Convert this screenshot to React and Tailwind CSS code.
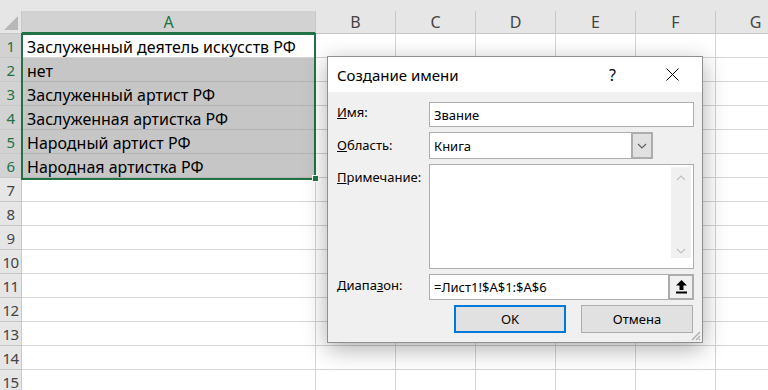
import React from "react";

const cells = [
  "Заслуженный деятель искусств РФ",
  "нет",
  "Заслуженный артист РФ",
  "Заслуженная артистка РФ",
  "Народный артист РФ",
  "Народная артистка РФ",
];

const otherCols = ["B", "C", "D", "E", "F", "G"];
const rows = Array.from({ length: 15 }, (_, i) => i + 1);

const Chevron = ({ up, color = "#606060", className = "" }) => (
  <svg width="10" height="6" viewBox="0 0 10 6" className={className}>
    <polyline
      points={up ? "1,5 5,1 9,5" : "1,1 5,5 9,1"}
      fill="none"
      stroke={color}
      strokeWidth="1.2"
    />
  </svg>
);

const Dialog = () => (
  <div className="absolute left-[327px] top-[56px] w-[376px] h-[287px] border border-[#8f8f8f] bg-[#f0f0f0] shadow-[0_6px_22px_rgba(0,0,0,0.32)] flex flex-col text-[13px] text-black font-['Noto_Sans','Liberation_Sans',sans-serif]">
    {/* Title bar */}
    <div className="h-[35px] bg-white flex items-center pl-[9px] shrink-0">
      <span className="text-[15px] leading-[20px]">Создание имени</span>
      <span className="ml-auto text-[16px] leading-[20px] mr-[50px]">?</span>
      <svg width="13" height="13" viewBox="0 0 13 13" className="mr-[23px]">
        <path d="M0.5 0.5 L12.5 12.5 M12.5 0.5 L0.5 12.5" stroke="#000" strokeWidth="1" />
      </svg>
    </div>

    {/* Body */}
    <div className="flex-1 flex flex-col pt-[10px] pl-[9px] pr-[8px] gap-[5px]">
      <div className="flex items-start">
        <div className="w-[92px] pt-[1px] leading-[18px]">
          <u>И</u>мя:
        </div>
        <div className="w-[265px] h-[25px] border border-[#adadad] bg-white flex items-center pl-[4px] leading-[18px]">
          Звание
        </div>
      </div>

      <div className="flex items-start">
        <div className="w-[92px] pt-[4px] leading-[18px]">
          <u>О</u>бласть:
        </div>
        <div className="w-[224px] h-[27px] border border-[#adadad] bg-white flex">
          <div className="flex-1 flex items-center pl-[4px] leading-[18px]">Книга</div>
          <div className="w-[22px] -my-[1px] -mr-[1px] border-2 border-[#adadad] bg-[#e1e1e1] flex items-center justify-center">
            <Chevron />
          </div>
        </div>
      </div>

      <div className="flex items-start">
        <div className="w-[92px] pt-[4px] leading-[18px]">
          <u>П</u>римечание:
        </div>
        <div className="w-[265px] h-[105px] border border-[#adadad] bg-white flex justify-end pt-[2px] pb-[10px] pr-[2px]">
          <div className="w-[20px] bg-[#f0f0f0] flex flex-col items-center justify-between pt-[8px] pb-[4px]">
            <Chevron up color="#c2c2c2" />
            <Chevron color="#c2c2c2" />
          </div>
        </div>
      </div>

      <div className="flex items-start">
        <div className="w-[92px] pt-[2px] leading-[18px]">
          Диапа<u>з</u>он:
        </div>
        <div className="w-[265px] h-[26px] border border-[#adadad] bg-white flex">
          <div className="flex-1 flex items-center pl-[4px] leading-[18px]">=Лист1!$A$1:$A$6</div>
          <div className="w-[26px] -my-[1px] -mr-[1px] border-2 border-[#adadad] bg-[#f0f0f0] flex items-center justify-center">
            <svg width="11" height="14" viewBox="0 0 11 14">
              <path d="M5.5 0 L11 5.5 L7.5 5.5 L7.5 10 L3.5 10 L3.5 5.5 L0 5.5 Z" fill="#000" />
              <rect x="0" y="11.5" width="11" height="2" fill="#000" />
            </svg>
          </div>
        </div>
      </div>

      <div className="flex justify-end gap-[15px] pr-[1px]">
        <button className="w-[112px] h-[28px] border-2 border-[#0078d7] bg-[#e1e1e1] leading-[18px]">
          OK
        </button>
        <button className="w-[112px] h-[28px] border border-[#adadad] bg-[#e1e1e1] leading-[18px]">
          Отмена
        </button>
      </div>
    </div>

    {/* Resize grip */}
    <svg width="12" height="12" viewBox="0 0 12 12" className="absolute right-[1px] bottom-[1px]">
      <path d="M11 3 L3 11 M11 7 L7 11 M11 10 L10 11" stroke="#b0b0b0" strokeWidth="1.4" />
    </svg>
  </div>
);

export default function App() {
  return (
    <div className="relative w-[768px] h-[390px] overflow-hidden bg-white font-['Noto_Sans','Liberation_Sans',sans-serif]">
      <div className="h-[11px] bg-[#e6e6e6]" />

      {/* Column headers */}
      <div className="flex h-[23px] bg-[#e6e6e6] text-[16px] leading-[22px] text-[#444]">
        <div className="w-[22px] shrink-0 border-r border-b border-[#c8c8c8] relative overflow-hidden">
          <svg width="22" height="23" viewBox="0 0 22 23" className="absolute left-0 top-0">
            <polygon points="18,5 18,19 4,19" fill="#b8b8b8" />
          </svg>
        </div>
        <div className="w-[294px] shrink-0 bg-[#d2d2d2] text-center text-[#217346] border-r border-[#c8c8c8] border-b-2 border-b-[#217346]">
          A
        </div>
        {otherCols.map((c) => (
          <div key={c} className="w-[80px] shrink-0 text-center border-r border-b border-[#c8c8c8]">
            {c}
          </div>
        ))}
      </div>

      {/* Rows */}
      {rows.map((r) => {
        const sel = r <= 6;
        return (
          <div key={r} className="flex h-[24px]">
            <div
              className={`w-[22px] shrink-0 border-r border-b border-[#c8c8c8] text-[15px] leading-[24px] text-center tracking-[-0.5px] ${
                sel ? "bg-[#d2d2d2] text-[#217346]" : "bg-[#e6e6e6] text-[#444]"
              }`}
            >
              {r}
            </div>
            <div
              className={`w-[294px] shrink-0 border-r border-b border-[#d4d4d4] pl-[5px] pt-[2px] text-[16px] leading-[22px] text-black whitespace-nowrap overflow-hidden ${
                sel && r > 1 ? "bg-[#c6c6c6] border-b-[#b4b4b4]" : "bg-white"
              }`}
            >
              {sel ? cells[r - 1] : ""}
            </div>
            {otherCols.map((c) => (
              <div key={c} className="w-[80px] shrink-0 border-r border-b border-[#d4d4d4]" />
            ))}
          </div>
        );
      })}

      {/* Selection border A1:A6 */}
      <div className="absolute left-[21px] top-[33px] w-[295px] h-[147px] border-2 border-[#217346] pointer-events-none" />
      <div className="absolute left-[312px] top-[175px] w-[7px] h-[7px] bg-[#217346] border border-white" />

      <Dialog />
    </div>
  );
}
